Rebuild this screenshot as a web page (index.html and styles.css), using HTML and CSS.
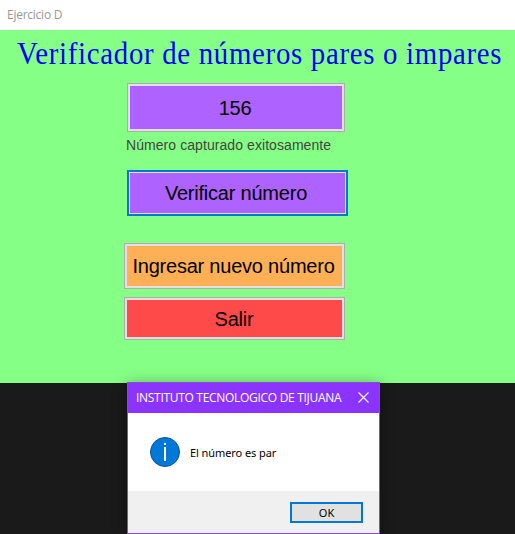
FILE: index.html
```html
<!DOCTYPE html>
<html lang="es">
<head>
<meta charset="utf-8">
<title>Ejercicio D</title>
<link rel="stylesheet" href="styles.css">
</head>
<body>
<div class="window">
  <header class="titlebar"><span>Ejercicio D</span></header>
  <main class="form">
    <h1 class="heading"><span>Verificador de números pares o impares</span></h1>
    <button class="btn number"><span>156</span></button>
    <p class="status"><span>Número capturado exitosamente</span></p>
    <button class="btn verify"><span>Verificar número</span></button>
    <button class="btn reset"><span>Ingresar nuevo número</span></button>
    <button class="btn exit"><span>Salir</span></button>
  </main>
</div>
<section class="dialog" role="dialog">
  <header class="dialog-title">
    <span class="dialog-name">INSTITUTO TECNOLOGICO DE TIJUANA</span>
    <svg width="11" height="11" viewBox="0 0 11 11"><path d="M.5 .5 10.5 10.5M10.5 .5 .5 10.5" stroke="#fff" stroke-width="1.1" fill="none"/></svg>
  </header>
  <div class="dialog-body">
    <svg width="30" height="30" viewBox="0 0 30 30"><circle cx="15" cy="15" r="14.5" fill="#0078d7" stroke="#075594"/><path d="M15 6v2M15 10v14" stroke="#fff" stroke-width="2" fill="none"/></svg>
    <span class="message">El número es par</span>
  </div>
  <footer class="dialog-footer"><button class="ok"><span>OK</span></button></footer>
</section>
</body>
</html>
```

FILE: styles.css
```css
* { box-sizing: border-box; }
body {
  margin: 0;
  width: 515px;
  height: 534px;
  overflow: hidden;
  background: #1a1a1a;
  font-family: "Liberation Sans", sans-serif;
}
.window { height: 383px; display: flex; flex-direction: column; }
.titlebar {
  height: 30px;
  padding-left: 7px;
  background: #fff;
  color: #999;
  font: 12px/30px "Open Sans", sans-serif;
  letter-spacing: -0.25px;
}
.form {
  flex: 1;
  display: flex;
  flex-direction: column;
  align-items: flex-start;
  background: #86ff86;
}
.heading {
  margin: 0 0 0 17px;
  height: 53px;
  color: #00f;
  font: 31px/47px "Liberation Serif", serif;
  letter-spacing: 0.75px;
  white-space: nowrap;
  transform: scaleX(.93);
  transform-origin: 0 0;
}
.btn {
  display: flex;
  align-items: center;
  justify-content: center;
  padding: 0;
  border: 1px solid #adadad;
  box-shadow: inset 0 0 0 2px #e1e1e1;
  color: #000;
  font: 20px/24px "Liberation Sans", sans-serif;
  letter-spacing: -0.22px;
  white-space: nowrap;
}
.number { width: 218px; height: 49px; margin-left: 127px; padding-right: 2px; background: #ae62ff; }
.status {
  height: 38px;
  margin: 0 0 0 126px;
  color: #444;
  font: 14px/27px "Liberation Sans", sans-serif;
  letter-spacing: 0.07px;
  white-space: nowrap;
}
.verify {
  width: 221px;
  height: 46px;
  margin: 0 0 27px 127px;
  padding-right: 3px;
  border: 2px solid #0078d7;
  box-shadow: inset 0 0 0 1px #e1e1e1;
  background: #ae62ff;
}
.reset { width: 221px; height: 46px; margin: 0 0 8px 124px; padding-right: 2px; background: #ffb056; }
.exit { width: 221px; height: 43px; margin-left: 124px; padding-right: 1px; background: #ff4a4a; }
.dialog {
  position: absolute;
  left: 127px;
  top: 382px;
  width: 253px;
  height: 152px;
  display: flex;
  flex-direction: column;
  border: 1px solid #8b46e0;
  background: #fff;
  box-shadow: 0 2px 14px rgba(0, 0, 0, .35);
}
.dialog-title {
  height: 30px;
  display: flex;
  align-items: center;
  justify-content: space-between;
  padding: 0 10px 2px 8px;
  background: #8b34ff;
  color: #fff;
  font: 12px/30px "Open Sans", sans-serif;
  letter-spacing: -0.3px;
  white-space: nowrap;
}
.dialog-name { padding-top: 2px; }
.dialog-body { height: 78px; display: flex; align-items: center; padding-left: 22px; }
.message {
  margin-left: 10px;
  padding-top: 1px;
  font: 11px/16px "Noto Sans", sans-serif;
  letter-spacing: -0.08px;
  color: #000;
}
.dialog-footer {
  flex: 1;
  display: flex;
  justify-content: flex-end;
  padding: 11px 16px 0 0;
  background: #f0f0f0;
}
.ok {
  width: 73px;
  height: 21px;
  padding: 0;
  border: 2px solid #0078d7;
  background: #e1e1e1;
  color: #000;
  font: 11px/17px "Noto Sans", sans-serif;
}
```
